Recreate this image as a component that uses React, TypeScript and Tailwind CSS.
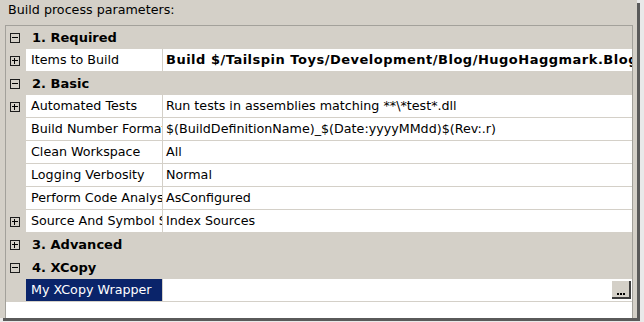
import React from "react";

type Row =
  | { kind: "cat"; label: string; open: boolean }
  | { kind: "prop"; label: string; value: string; expand?: boolean; bold?: boolean; selected?: boolean };

const rows: Row[] = [
  { kind: "cat", label: "1. Required", open: true },
  { kind: "prop", label: "Items to Build", value: "Build $/Tailspin Toys/Development/Blog/HugoHaggmark.Blog.sln", expand: true, bold: true },
  { kind: "cat", label: "2. Basic", open: true },
  { kind: "prop", label: "Automated Tests", value: "Run tests in assemblies matching **\\*test*.dll", expand: true },
  { kind: "prop", label: "Build Number Format", value: "$(BuildDefinitionName)_$(Date:yyyyMMdd)$(Rev:.r)" },
  { kind: "prop", label: "Clean Workspace", value: "All" },
  { kind: "prop", label: "Logging Verbosity", value: "Normal" },
  { kind: "prop", label: "Perform Code Analysis", value: "AsConfigured" },
  { kind: "prop", label: "Source And Symbol Server Settings", value: "Index Sources", expand: true },
  { kind: "cat", label: "3. Advanced", open: false },
  { kind: "cat", label: "4. XCopy", open: true },
  { kind: "prop", label: "My XCopy Wrapper", value: "", selected: true },
];

function Toggle({ open }: { open: boolean }) {
  return (
    <div className="relative w-[10px] h-[10px] border border-[#1c1c1c] ml-[4px]">
      <div className="absolute left-[1px] top-[3px] w-[6px] h-px bg-black" />
      {!open && <div className="absolute left-[3px] top-[1px] w-px h-[6px] bg-black" />}
    </div>
  );
}

export default function App() {
  return (
    <div className="w-[644px] h-[322px] bg-[#e9e9e9] overflow-hidden text-black" style={{ fontFamily: "'DejaVu Sans', sans-serif" }}>
      <div className="w-[637px] h-[318px] bg-[#d4d0c8] flex flex-col shadow-[3px_3px_0_#5a5a5a]">
        {/* Title */}
        <div className="h-[25px] pl-[8px] pt-[1px] text-[12.7px] leading-[18px] shrink-0">Build process parameters:</div>

        {/* Property grid */}
        <div className="ml-[5px] w-[628px] flex-1 border-l border-t border-r border-[#a3a19b] bg-white flex flex-col overflow-hidden">
          {rows.map((r, i) =>
            r.kind === "cat" ? (
              <div key={i} className="h-[23px] shrink-0 flex items-center bg-[#d4d0c8]">
                <div className="w-[20px] flex items-center">
                  <Toggle open={r.open} />
                </div>
                <span className="pl-[6px] font-bold text-[13px]">{r.label}</span>
              </div>
            ) : (
              <div key={i} className="h-[23px] shrink-0 flex bg-[#d4d0c8]">
                <div className="w-[20px] flex items-center">{r.expand && <Toggle open={false} />}</div>
                <div
                  className={
                    "w-[136px] h-[22px] flex items-center pl-[5px] overflow-hidden whitespace-nowrap text-[12.7px] " +
                    (r.selected ? "bg-[#0a246a] text-white" : "bg-white")
                  }
                >
                  {r.label}
                </div>
                <div className="w-px" />
                <div className="flex-1 h-[22px] bg-white flex items-center pl-[3px] overflow-hidden whitespace-nowrap">
                  {r.bold ? (
                    <span className="font-bold text-[13px] tracking-[0.5px]">{r.value}</span>
                  ) : (
                    <span className="text-[12.7px]">{r.value}</span>
                  )}
                  {r.selected && (
                    <div className="ml-auto mr-px w-[19px] h-[18px] bg-[#d4d0c8] border-r-2 border-b-2 border-[#3c3c3c] flex items-end justify-center gap-[1px] pb-[2px]">
                      <div className="w-[2px] h-[2px] bg-black" />
                      <div className="w-[2px] h-[2px] bg-black" />
                      <div className="w-[2px] h-[2px] bg-black" />
                    </div>
                  )}
                </div>
              </div>
            )
          )}
          <div className="flex-1 bg-white" />
        </div>
      </div>
    </div>
  );
}
